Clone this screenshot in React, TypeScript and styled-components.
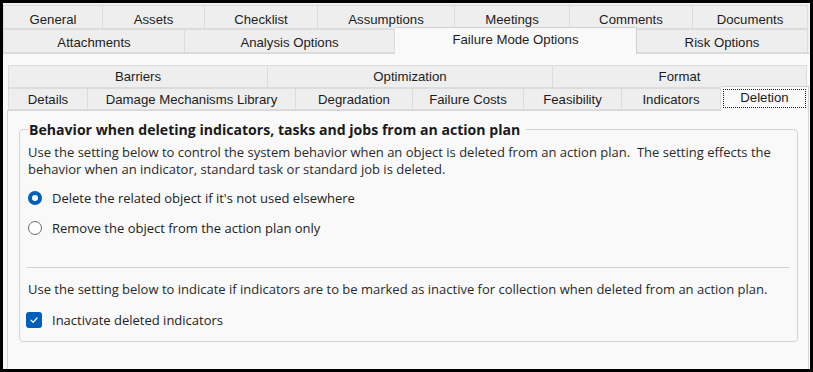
import styled, { createGlobalStyle } from "styled-components";

const GlobalStyle = createGlobalStyle`
  html, body { margin: 0; padding: 0; background: #000; }
  body { font-family: "Liberation Sans", Arial, sans-serif; }
`;

type TabDef = { label: string; w: number; active?: boolean };

const outerRows: TabDef[][] = [
  [
    { label: "General", w: 100 },
    { label: "Assets", w: 102 },
    { label: "Checklist", w: 113 },
    { label: "Assumptions", w: 137 },
    { label: "Meetings", w: 115 },
    { label: "Comments", w: 123 },
    { label: "Documents", w: 115 },
  ],
  [
    { label: "Attachments", w: 182 },
    { label: "Analysis Options", w: 210 },
    { label: "Failure Mode Options", w: 242, active: true },
    { label: "Risk Options", w: 171 },
  ],
];

const innerRows: TabDef[][] = [
  [
    { label: "Barriers", w: 260 },
    { label: "Optimization", w: 285 },
    { label: "Format", w: 254 },
  ],
  [
    { label: "Details", w: 80 },
    { label: "Damage Mechanisms Library", w: 208 },
    { label: "Degradation", w: 117 },
    { label: "Failure Costs", w: 111 },
    { label: "Feasibility", w: 98 },
    { label: "Indicators", w: 99 },
    { label: "Deletion", w: 88, active: true },
  ],
];

const Frame = styled.div`
  width: 813px;
  height: 372px;
  box-sizing: border-box;
  border: 3px solid #000;
  background: #f0f0f0;
  display: flex;
  flex-direction: column;
  overflow: hidden;
  padding-top: 2px;
`;

const TabStrip = styled.div`
  display: flex;
  flex-direction: column;
  padding-right: 2px;
`;

const TabRow = styled.div<{ $h: number }>`
  display: flex;
  height: ${(p) => p.$h}px;
`;

const Tab = styled.div<{ $w: number; $active?: boolean; $nudge: number }>`
  flex: 0 0 ${(p) => p.$w}px;
  box-sizing: border-box;
  display: flex;
  align-items: center;
  justify-content: center;
  font-size: 13.2px;
  color: #1c1c1c;
  padding-top: ${(p) => p.$nudge}px;
  border: 1px solid #dcdcdc;
  border-left-width: 0;
  background: ${(p) => (p.$active ? "#f9f9f9" : "#eeeeee")};
  position: relative;
  ${(p) =>
    p.$active &&
    `
    margin-top: -2px;
    height: calc(100% + 3px);
    border-bottom: none;
    border-color: #d0d0d0;
    z-index: 1;
    padding-top: 0;
    padding-bottom: 3px;
  `}
  &:first-child {
    border-left-width: 1px;
  }
`;

const Focus = styled.span`
  position: absolute;
  inset: 2px 2px 3px 2px;
  border: 1px dotted #222;
`;

const OuterPage = styled.div`
  flex: 1;
  background: #f9f9f9;
  border-top: 1px solid #d9d9d9;
  padding: 11px 1px 0 4px;
  display: flex;
  flex-direction: column;
`;

const InnerTabs = styled.div`
  display: flex;
  flex-direction: column;
  padding-left: 1px;
`;

const InnerPage = styled.div`
  flex: 1;
  background: #f9f9f9;
  border: 1px solid #d6d6d6;
  border-bottom: none;
  padding: 10px 10px 0 11px;
`;

const GroupBox = styled.fieldset`
  margin: 0;
  border: 1px solid #d3d3d3;
  border-radius: 4px;
  padding: 6px 8px 0 8px;
  height: 221px;
  box-sizing: border-box;
  color: #2a2a2a;
  font-family: "Open Sans", "Liberation Sans", sans-serif;
  font-size: 13px;
`;

const Legend = styled.legend`
  font-weight: bold;
  font-size: 14.1px;
  line-height: 17px;
  color: #1a1a1a;
  padding: 0 6px 0 1px;
  margin-left: 0;
`;

const Para = styled.p`
  margin: 0;
  line-height: 17px;
`;

const OptionRow = styled.label<{ $top: number }>`
  display: flex;
  align-items: center;
  gap: 10px;
  margin-top: ${(p) => p.$top}px;
  height: 18px;
  color: #222;
`;

const Radio = styled.span<{ $on?: boolean }>`
  width: 14px;
  height: 14px;
  box-sizing: border-box;
  border-radius: 50%;
  border: ${(p) => (p.$on ? "4px solid #005fb8" : "1px solid #6a6a6a")};
  background: #fff;
  flex: none;
`;

const Check = styled.span`
  width: 16px;
  height: 16px;
  border-radius: 3px;
  background: #005fb8;
  display: flex;
  align-items: center;
  justify-content: center;
  flex: none;
  margin-left: -2px;
`;

const Divider = styled.hr`
  border: none;
  border-top: 1px solid #d3d3d3;
  margin: 30px -1px 13px -1px;
`;

const renderRow = (row: TabDef[], h: number, nudge: number, focus?: boolean) => (
  <TabRow $h={h}>
    {row.map((t) => (
      <Tab key={t.label} $w={t.w} $active={t.active} $nudge={nudge}>
        {t.label}
        {t.active && focus && <Focus />}
      </Tab>
    ))}
  </TabRow>
);

export default function App() {
  return (
    <>
      <GlobalStyle />
      <Frame>
        <TabStrip>
          {renderRow(outerRows[0], 24, 4)}
          {renderRow(outerRows[1], 24, 2)}
        </TabStrip>
        <OuterPage>
          <InnerTabs>
            {renderRow(innerRows[0], 23, 0)}
            {renderRow(innerRows[1], 22, 0, true)}
          </InnerTabs>
          <InnerPage>
            <GroupBox>
              <Legend>Behavior when deleting indicators, tasks and jobs from an action plan</Legend>
              <Para>
                Use the setting below to control the system behavior when an object is deleted from an action plan.&nbsp; The setting effects the
                <br />
                behavior when an indicator, standard task or standard job is deleted.
              </Para>
              <OptionRow $top={11}>
                <Radio $on />
                Delete the related object if it's not used elsewhere
              </OptionRow>
              <OptionRow $top={12}>
                <Radio />
                Remove the object from the action plan only
              </OptionRow>
              <Divider />
              <Para>
                Use the setting below to indicate if indicators are to be marked as inactive for collection when deleted from an action plan.
              </Para>
              <OptionRow $top={13}>
                <Check>
                  <svg width="10" height="10" viewBox="0 0 10 10">
                    <path d="M2 5.2 L4.2 7.3 L8 3" fill="none" stroke="#fff" strokeWidth="1.2" strokeLinecap="round" strokeLinejoin="round" />
                  </svg>
                </Check>
                Inactivate deleted indicators
              </OptionRow>
            </GroupBox>
          </InnerPage>
        </OuterPage>
      </Frame>
    </>
  );
}
